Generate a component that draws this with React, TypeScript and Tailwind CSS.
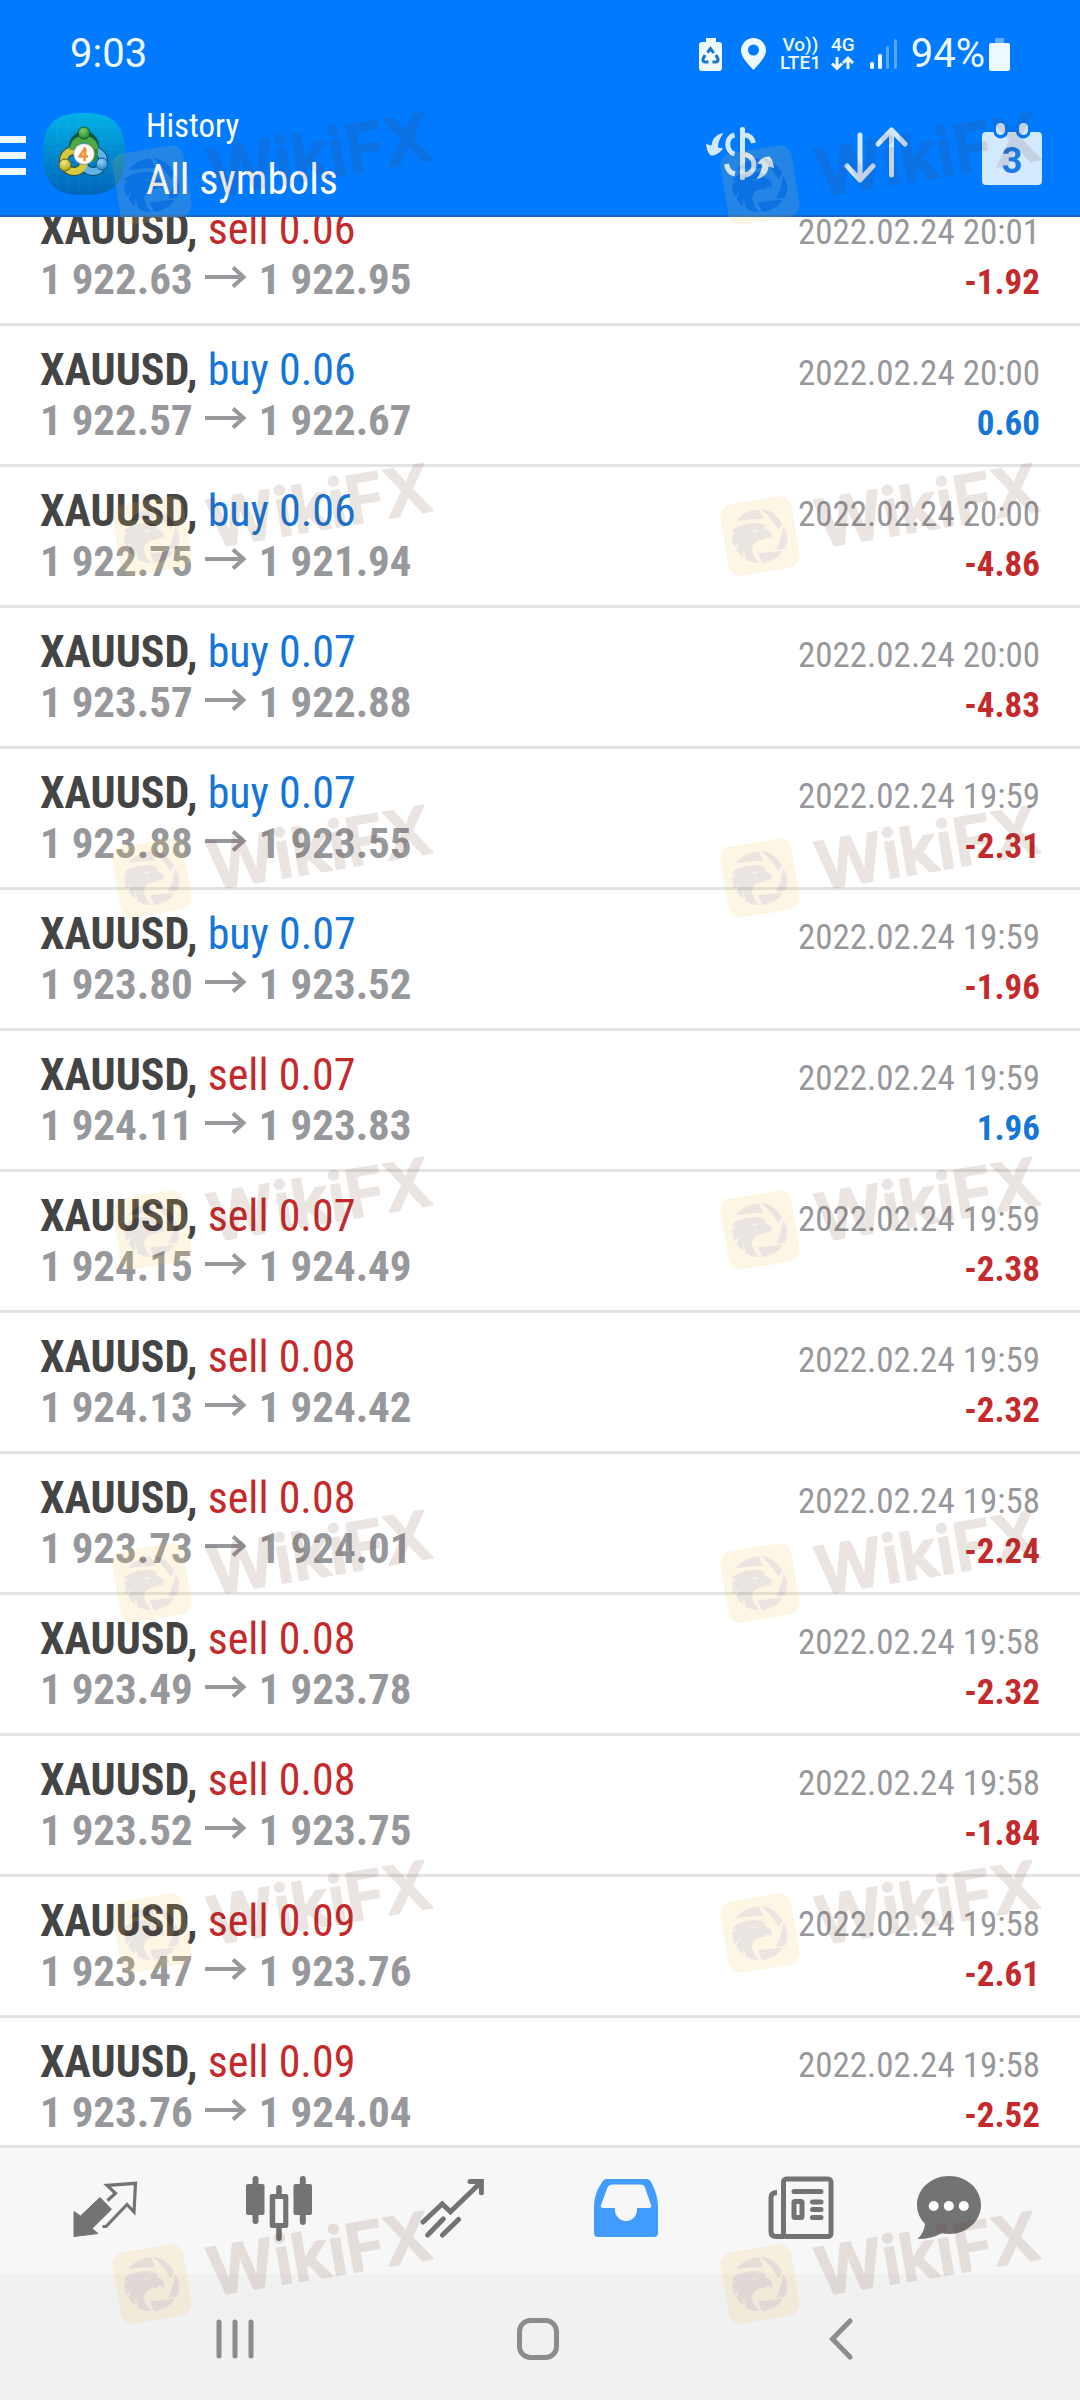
import React from 'react';

interface Deal {
  id: number;
  side: 'buy' | 'sell';
  volume: string;
  open: string;
  close: string;
  time: string;
  profit: string;
}

const deals: Deal[] = [
  { id: 1, side: 'sell', volume: '0.06', open: '1 922.63', close: '1 922.95', time: '2022.02.24 20:01', profit: '-1.92' },
  { id: 2, side: 'buy', volume: '0.06', open: '1 922.57', close: '1 922.67', time: '2022.02.24 20:00', profit: '0.60' },
  { id: 3, side: 'buy', volume: '0.06', open: '1 922.75', close: '1 921.94', time: '2022.02.24 20:00', profit: '-4.86' },
  { id: 4, side: 'buy', volume: '0.07', open: '1 923.57', close: '1 922.88', time: '2022.02.24 20:00', profit: '-4.83' },
  { id: 5, side: 'buy', volume: '0.07', open: '1 923.88', close: '1 923.55', time: '2022.02.24 19:59', profit: '-2.31' },
  { id: 6, side: 'buy', volume: '0.07', open: '1 923.80', close: '1 923.52', time: '2022.02.24 19:59', profit: '-1.96' },
  { id: 7, side: 'sell', volume: '0.07', open: '1 924.11', close: '1 923.83', time: '2022.02.24 19:59', profit: '1.96' },
  { id: 8, side: 'sell', volume: '0.07', open: '1 924.15', close: '1 924.49', time: '2022.02.24 19:59', profit: '-2.38' },
  { id: 9, side: 'sell', volume: '0.08', open: '1 924.13', close: '1 924.42', time: '2022.02.24 19:59', profit: '-2.32' },
  { id: 10, side: 'sell', volume: '0.08', open: '1 923.73', close: '1 924.01', time: '2022.02.24 19:58', profit: '-2.24' },
  { id: 11, side: 'sell', volume: '0.08', open: '1 923.49', close: '1 923.78', time: '2022.02.24 19:58', profit: '-2.32' },
  { id: 12, side: 'sell', volume: '0.08', open: '1 923.52', close: '1 923.75', time: '2022.02.24 19:58', profit: '-1.84' },
  { id: 13, side: 'sell', volume: '0.09', open: '1 923.47', close: '1 923.76', time: '2022.02.24 19:58', profit: '-2.61' },
  { id: 14, side: 'sell', volume: '0.09', open: '1 923.76', close: '1 924.04', time: '2022.02.24 19:58', profit: '-2.52' },
];

const StatusBar: React.FC = () => (
  <div className="flex h-[104px] items-center justify-between px-[70px] pt-1 font-['Roboto',sans-serif] text-[40px] text-[#eef9ff]">
    <span>9:03</span>
    <div className="flex items-center">
      <svg width="23" height="33" viewBox="0 0 23 33" fill="currentColor">
        <path d="M7 0h10v4h3q3 0 3 3v23q0 3-3 3H3q-3 0-3-3V7q0-3 3-3h4z" />
        <g fill="none" stroke="#1f74c8" strokeWidth="3">
          <path d="M8.5 14.5l3-4 3.200 4.500M6 17l-2 4q-.5 3 2.500 3h3M17 17l2 4q.5 3-2.500 3h-3" />
        </g>
      </svg>
      <svg className="ml-[19px]" width="25" height="32" viewBox="0 0 25 32" fill="currentColor">
        <path fillRule="evenodd" d="M12.500 0A12.500 12.500 0 0 1 25 12.500C25 19 18 26 12.500 32 7 26 0 19 0 12.500A12.500 12.500 0 0 1 12.500 0zm0 6.500a5.500 5.500 0 1 0 0 11 5.500 5.500 0 0 0 0-11z" />
      </svg>
      <span className="ml-[14px] flex flex-col items-center text-[19px] leading-[18px] font-medium">
        <span>Vo))</span>
        <span>LTE1</span>
      </span>
      <span className="ml-[10px] flex flex-col items-center text-[19px] leading-[18px] font-medium">
        <span>4G</span>
        <svg width="23" height="18" viewBox="0 0 23 18" fill="none" stroke="currentColor" strokeWidth="3">
          <path d="M6 3v11M1 9.500l5 5 5-5M17 15V4M12 9l5-5 5 5" />
        </svg>
      </span>
      <svg className="ml-[15px]" width="27" height="30" viewBox="0 0 27 30" fill="currentColor">
        <rect x="0" y="23" width="4" height="7" rx="1.500" />
        <rect x="8" y="15" width="4" height="15" rx="1.500" />
        <rect x="16" y="7" width="3" height="23" rx="1.500" opacity=".35" />
        <rect x="24" y="0" width="3" height="30" rx="1.500" opacity=".35" />
      </svg>
      <span className="ml-[14px]">94%</span>
      <svg className="ml-1" width="21" height="33" viewBox="0 0 21 33" fill="currentColor">
        <rect x="6" y="0" width="9" height="5" rx="1" opacity=".4" />
        <rect x="0" y="5" width="21" height="28" rx="2" />
      </svg>
    </div>
  </div>
);

const AppLogo: React.FC = () => (
  <svg width="82" height="82" viewBox="0 0 82 82">
    <defs>
      <linearGradient id="tile" x1="0" y1="0" x2="0" y2="1">
        <stop offset="0" stopColor="#00b2e8" />
        <stop offset=".5" stopColor="#0089cf" />
        <stop offset="1" stopColor="#0065b8" />
      </linearGradient>
      <radialGradient id="green" cx=".4" cy=".3" r=".8">
        <stop offset="0" stopColor="#7fce6a" />
        <stop offset="1" stopColor="#157a2b" />
      </radialGradient>
      <radialGradient id="yellow" cx=".4" cy=".3" r=".8">
        <stop offset="0" stopColor="#f3ea7c" />
        <stop offset="1" stopColor="#a79812" />
      </radialGradient>
      <radialGradient id="blue" cx=".4" cy=".3" r=".8">
        <stop offset="0" stopColor="#8fd2f5" />
        <stop offset="1" stopColor="#1d7cc4" />
      </radialGradient>
    </defs>
    <path d="M41 0C69 0 82 10 82 41S69 82 41 82 0 72 0 41 13 0 41 0z" fill="url(#tile)" />
    <path d="M14 8v66M25 4v74M36 2v78M47 2v78M58 4v74M69 8v66M8 14h66M4 25h74M2 36h78M2 47h78M4 58h74M8 69h66" stroke="#fff" strokeOpacity=".05" />
    <g fill="none" strokeWidth="7">
      <circle cx="41" cy="33" r="10.500" stroke="#0b5a4a" strokeWidth="9" />
      <circle cx="31" cy="48" r="10.500" stroke="#3f4a18" strokeWidth="9" />
      <circle cx="50" cy="48" r="10.500" stroke="#0c4470" strokeWidth="9" />
      <circle cx="50" cy="48" r="10.500" stroke="#5fb4e6" />
      <circle cx="31" cy="48" r="10.500" stroke="#d6c93f" />
      <path d="M30 37a11 11 0 0 1 22 0" stroke="#4fa844" />
      <path d="M52 36q2 6-3 12" stroke="#2f8c35" strokeWidth="5" />
    </g>
    <circle cx="41" cy="20" r="6" fill="url(#green)" stroke="#0c5a2a" />
    <circle cx="22" cy="52" r="6" fill="url(#yellow)" stroke="#6a6413" />
    <circle cx="59" cy="51" r="6" fill="url(#blue)" stroke="#0f5288" />
    <circle cx="41" cy="41" r="10.500" fill="#fdfdfb" stroke="#8a8a70" strokeWidth=".8" />
    <path d="M42.500 34.500L36.500 43.500H45M42.500 35L41.500 48" fill="none" stroke="#f0913a" strokeWidth="2.500" strokeLinejoin="round" />
  </svg>
);

const Header: React.FC = () => (
  <header className="flex items-center border-b-2 border-[#1a68c4] pr-[38px] pb-[11px] text-white">
    <button aria-label="Menu" className="flex flex-col gap-[9px] pt-[2px]">
      <span className="h-[7px] w-[26px] bg-[#eef9ff]"></span>
      <span className="h-[7px] w-[26px] bg-[#eef9ff]"></span>
      <span className="h-[7px] w-[26px] bg-[#eef9ff]"></span>
    </button>
    <div className="ml-[17px]">
      <AppLogo />
    </div>
    <div className="ml-[21px] flex flex-col gap-2">
      <p className="text-[33px] leading-[44px]">History</p>
      <h1 className="text-[42px] leading-[48px]">All symbols</h1>
    </div>
    <div className="ml-auto flex items-center gap-[70px] text-[#d3e9ff]">
      <button aria-label="Deals and currency">
        <svg width="68" height="62" viewBox="0 0 68 62" fill="currentColor">
          <rect x="34" y="4" width="5" height="53" rx="2" />
          <path d="M28.500 12C19.500 14 19.500 28 28.500 31M39 12C43.500 12.500 46.500 15 47.500 20M39 31.500C51 34 51 50 39 52M20.500 41C21.500 47 24 50 29 51" fill="none" stroke="currentColor" strokeWidth="5" />
          <path d="M17.500 10C9 11.500 6 17 5.500 22.500L0 21C.5 26 2 30 4.500 32.500 9 33 14 30 17 25.500L12 24.500C12 19 14 15 17.500 10z" />
          <path d="M17.500 10C9 11.500 6 17 5.500 22.500L0 21C.5 26 2 30 4.500 32.500 9 33 14 30 17 25.500L12 24.500C12 19 14 15 17.500 10z" transform="rotate(180 34 33)" />
        </svg>
      </button>
      <button aria-label="Sort">
        <svg width="68" height="62" viewBox="0 0 68 62" fill="none" stroke="currentColor" strokeWidth="5" strokeLinecap="round" strokeLinejoin="round">
          <path d="M16 12v45M3 43l13 14 13-14M47.500 52V7M34 21L47.500 7 61 21" />
        </svg>
      </button>
      <button aria-label="Period">
        <svg width="60" height="62" viewBox="0 0 60 62" fill="currentColor">
          <path d="M4 9h7.500a7.300 7.300 0 0 0 14.500 0h8a7.300 7.300 0 0 0 14.500 0H56q4 0 4 4v45q0 4-4 4H4q-4 0-4-4V13q0-4 4-4z" />
          <rect x="14" y="0" width="9" height="12" rx="4.500" />
          <rect x="37" y="0" width="9" height="12" rx="4.500" />
          <text x="30" y="50" textAnchor="middle" className="fill-[#1a7ae6] font-['Roboto',sans-serif] text-[36px] font-bold">3</text>
        </svg>
      </button>
    </div>
  </header>
);

const DealRow: React.FC<{ deal: Deal }> = ({ deal }) => (
  <li className="border-b-3 border-[#e3e3e3] px-10 py-[19px]">
    <div className="flex h-[50px] items-baseline justify-between leading-[50px]">
      <p className="text-[44px]">
        <span className="font-bold text-[#444444]">XAUUSD,</span>{' '}
        <span className={deal.side === 'buy' ? 'text-[#1576d8]' : 'text-[#c42a2c]'}>
          {deal.side} {deal.volume}
        </span>
      </p>
      <time className="text-[35px] text-[#97989c]">{deal.time}</time>
    </div>
    <div className="flex h-[50px] items-baseline justify-between leading-[50px]">
      <p className="text-[43px] font-bold text-[#97989c]">
        {deal.open}
        <svg className="mx-3 inline align-baseline" width="42" height="28" viewBox="0 0 42 28" fill="none" stroke="currentColor" strokeWidth="4">
          <path d="M0 11h39M28 1.500L38.500 11 28 20.500" />
        </svg>
        {deal.close}
      </p>
      <span className={`text-[35px] font-bold ${deal.profit.startsWith('-') ? 'text-[#c42a2c]' : 'text-[#1576d8]'}`}>
        {deal.profit}
      </span>
    </div>
  </li>
);

const tabClass = 'flex flex-[174_1_0%] items-center justify-center';

const TabBar: React.FC = () => (
  <nav className="flex h-[129px] border-t-3 border-[#e3e3e3] bg-[#f7f7f7] pr-[70px] pb-1 pl-[18px] text-[#737373]">
    <button aria-label="Quotes" className={tabClass}>
      <svg width="66" height="66" viewBox="0 0 66 66">
        <path d="M2 60.500V35.500l6.500 4.500L28 21.500l11.500 11.800L20 52.500l6 5z" fill="currentColor" stroke="currentColor" strokeLinejoin="round" />
        <path d="M35.500 24.500l8-7.200-8.500-8 28.500-2L62 36l-7-7.500L34 50.500h-3.500" fill="none" stroke="currentColor" strokeWidth="3.200" />
      </svg>
    </button>
    <button aria-label="Chart" className={tabClass}>
      <svg width="66" height="66" viewBox="0 0 66 66" fill="currentColor">
        <rect x="0" y="8" width="18.500" height="31" rx="2" />
        <rect x="6.500" y="0" width="6" height="48" rx="3" />
        <rect x="47.500" y="8" width="18.500" height="31" rx="2" />
        <rect x="53.800" y="0" width="6" height="49" rx="3" />
        <path fillRule="evenodd" d="M26 18h4.200v-6q0-3 2.800-3t2.800 3v6H40q2.300 0 2.300 2v30q0 2-2.300 2h-4.200v10q0 3-2.800 3t-2.800-3V52H26q-2.300 0-2.300-2V20q0-2 2.300-2zm3.200 5v24h8V23z" />
      </svg>
    </button>
    <button aria-label="Trade" className={tabClass}>
      <svg width="66" height="66" viewBox="0 0 66 66" fill="none" stroke="currentColor" strokeWidth="5" strokeLinecap="round">
        <path d="M3 46l19.200-18 8.200 7.700L61 6.300M50 5.500h11.400v11.200M7.700 59l15.500-16M22.500 59l16-15.500" />
      </svg>
    </button>
    <button aria-label="History" aria-current="page" className={`${tabClass} text-[#429bff]`}>
      <svg width="66" height="66" viewBox="0 0 66 66" fill="currentColor">
        <path fillRule="evenodd" d="M12 3h41q2.500 0 3.800 2.500C61 13 64 22 64 31v26q0 4-4 4H4q-4 0-4-4V31C0 22 3 13 8.500 5.500Q10 3 12 3zm7 5.500q-4 0-5.500 3L7 29q-.8 3 2 3h12v2a11 11 0 0 0 22 0v-2h12q3 0 2-3L51 11.500q-1-3-5-3z" />
      </svg>
    </button>
    <button aria-label="News" className={tabClass}>
      <svg width="66" height="66" viewBox="0 0 66 66" fill="none" stroke="currentColor" strokeWidth="5">
        <rect x="15.500" y="3" width="47.500" height="57.500" rx="3" />
        <path d="M9 16.500q-6 0-6 5V56q0 4.500 5 4.500h8" />
        <path d="M26 15.500h27M44.500 26H53M44.500 33.500H53M44.500 41.500H53" strokeLinecap="round" />
        <rect x="26" y="25.500" width="8" height="16" rx="1" />
      </svg>
    </button>
    <button aria-label="Messages" className="flex flex-[122_1_0%] items-center justify-center">
      <svg width="66" height="66" viewBox="0 0 66 66" fill="currentColor">
        <path d="M33 0C51 0 65 13 65 29S51 58 33 58q-4 0-7-1Q16 63 1.500 63 8 57 9 48 1 40 1 29C1 13 15 0 33 0z" />
        <g fill="#fff">
          <circle cx="17.700" cy="30" r="5" />
          <circle cx="32.800" cy="30" r="5" />
          <circle cx="47.800" cy="30" r="5" />
        </g>
      </svg>
    </button>
  </nav>
);

const SystemNav: React.FC = () => (
  <nav className="flex h-[126px] bg-[#f1f1f1] pt-1 pr-[88px] pl-[84px] text-[#8c8c8c]">
    <button aria-label="Recent apps" className="flex flex-1 items-center justify-center">
      <svg width="42" height="42" viewBox="0 0 42 42" fill="none" stroke="currentColor" strokeWidth="5" strokeLinecap="round">
        <path d="M5 4v34M21 4v34M37 4v34" />
      </svg>
    </button>
    <button aria-label="Home" className="flex flex-1 items-center justify-center">
      <svg width="42" height="42" viewBox="0 0 42 42" fill="none" stroke="currentColor" strokeWidth="5">
        <rect x="2.500" y="2.500" width="37" height="37" rx="11" />
      </svg>
    </button>
    <button aria-label="Back" className="flex flex-1 items-center justify-center">
      <svg width="42" height="42" viewBox="0 0 42 42" fill="none" stroke="currentColor" strokeWidth="5" strokeLinecap="round">
        <path d="M30 3L12.500 21 30 39" />
      </svg>
    </button>
  </nav>
);

const markColumns = [112, 720];
const markRows = [111, 462, 804, 1156, 1509, 1859, 2210];

// Eagle inside the shutter, shared by the fill and the cut-out
const Eagle: React.FC = () => (
  <g transform="scale(.3333) translate(-181 -168)">
    <path d="M109 124Q132 93 177 87L191 116Q150 116 109 124z" />
    <path d="M184 86Q224 90 247 130L238 150Q216 116 184 86z" />
    <path d="M251 139Q272 172 256 206L229 209Q246 176 251 139z" />
    <path d="M174 220L249 212Q228 246 187 249z" />
    <path fillRule="evenodd" d="M101 148Q130 128 165 129 190 130 196 137L195 147Q214 152 216 163V178Q206 172 196 173L200 179Q172 178 162 193 153 208 162 226 168 240 179 249 154 250 138 238L132 208 130 232Q116 222 110 208L122 184 104 202Q97 184 98 166L116 152 99 160zM156 149Q160 158 172 154L176 149Q166 153 156 149z" />
  </g>
);

const Watermark: React.FC = () => (
  <svg aria-hidden="true" className="pointer-events-none absolute inset-0 z-20 h-full w-full">
    <defs>
      <mask id="shutter" maskUnits="userSpaceOnUse" x="-45" y="-45" width="90" height="90">
        <rect x="-45" y="-45" width="90" height="90" fill="#fff" />
        <Eagle />
      </mask>
    </defs>
    {markRows.map(y =>
      markColumns.map(x => (
        <g key={`${x}-${y}`} transform={`translate(${x} ${y})`}>
          <g transform="translate(40 74)">
            <g mask="url(#shutter)">
              <rect x="-36" y="-36" width="72" height="72" rx="12" transform="rotate(-9.500)" fill="#f2c34b" opacity=".15" />
            </g>
            <g fill="#612f1e" opacity=".12">
              <Eagle />
            </g>
          </g>
          <text x="100" y="86" transform="rotate(-9.600 100 86)" opacity=".12" fill="#612f1e" stroke="#612f1e" strokeWidth="2" strokeLinejoin="round" className="font-['Inter',sans-serif] text-[66px] font-semibold">
            WikiFX
          </text>
        </g>
      ))
    )}
  </svg>
);

const App: React.FC = () => {
  return (
    <div className="relative flex h-screen flex-col overflow-hidden bg-white font-['Roboto_Condensed','Roboto',sans-serif]">
      <div className="bg-[#007bff]">
        <StatusBar />
        <Header />
      </div>
      <main className="min-h-0 flex-1 overflow-hidden">
        {/* list is scrolled a little past the first deal */}
        <ul className="-mt-8">
          {deals.map(deal => (
            <DealRow key={deal.id} deal={deal} />
          ))}
        </ul>
      </main>
      <TabBar />
      <SystemNav />
      <Watermark />
    </div>
  );
};

export default App;
